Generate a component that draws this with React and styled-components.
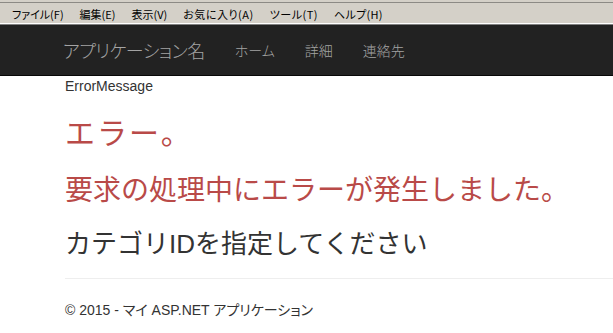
import React from "react";
import styled, { createGlobalStyle } from "styled-components";

const Global = createGlobalStyle`
  html, body { margin: 0; padding: 0; background: #fff; }
  body { font-family: "Liberation Sans", "Noto Sans CJK JP", sans-serif; color: #333; }
`;

const Page = styled.div`
  display: flex;
  flex-direction: column;
  width: 613px;
  overflow: hidden;
`;

const MenuBar = styled.div`
  height: 25px;
  box-sizing: border-box;
  display: flex;
  align-items: center;
  padding: 3px 0 0 4px;
  background: linear-gradient(
    to bottom,
    #d4d0c8 0 2px,
    #8c8a85 2px 3px,
    #d4d0c8 3px 23px,
    #ffffff 23px 24px,
    #808080 24px 25px
  );
  font-family: "Noto Sans CJK JP", sans-serif;
  font-feature-settings: "palt";
  font-size: 11px;
  color: #000;
`;

const MenuItem = styled.span`
  padding: 0 8px;
  white-space: nowrap;
  line-height: 16px;
  letter-spacing: ${(p) => p.$spacing || 0}px;
`;

const NavBar = styled.nav`
  height: 50px;
  background: #222;
  border-bottom: 1px solid #080808;
  display: flex;
  align-items: stretch;
  padding-left: 48px;
  font-family: "Noto Sans CJK JP", sans-serif;
  font-feature-settings: "palt";
  color: #9d9d9d;
`;

const Brand = styled.a`
  padding: 0 15px;
  line-height: 50px;
  font-size: 18px;
  letter-spacing: -0.5px;
  font-weight: 300;
  color: #a4a4a4;
  text-decoration: none;
  white-space: nowrap;
`;

const NavLink = styled.a`
  padding: 0 15px;
  line-height: 50px;
  font-size: 14px;
  font-weight: 300;
  color: #a4a4a4;
  text-decoration: none;
  white-space: nowrap;
`;

const Body = styled.main`
  display: flex;
  flex-direction: column;
  padding-left: 65px;
`;

const Message = styled.div`
  font-size: 14px;
  line-height: 20px;
  color: #333;
`;

const Heading = styled.div`
  font-size: ${(p) => p.$size}px;
  line-height: 1.1;
  letter-spacing: ${(p) => p.$spacing || 0}px;
  margin-top: ${(p) => p.$top}px;
  color: ${(p) => (p.$danger ? "#b94a48" : "#333")};
  white-space: nowrap;
`;

const Rule = styled.hr`
  margin: 20px 0 0;
  border: 0;
  border-top: 1px solid #eee;
  height: 0;
`;

const Footer = styled.footer`
  margin-top: 21px;
  font-size: 14px;
  line-height: 20px;
  color: #333;
  font-feature-settings: "palt";
  white-space: nowrap;
`;

export default function App() {
  const menus = [
    ["ファイル(F)", 0],
    ["編集(E)", 0],
    ["表示(V)", 0],
    ["お気に入り(A)", 0.5],
    ["ツール(T)", 0.5],
    ["ヘルプ(H)", 0.3],
  ];
  return (
    <Page>
      <Global />
      <MenuBar>
        {menus.map(([m, s]) => (
          <MenuItem key={m} $spacing={s}>{m}</MenuItem>
        ))}
      </MenuBar>
      <NavBar>
        <Brand>アプリケーション名</Brand>
        <NavLink>ホーム</NavLink>
        <NavLink>詳細</NavLink>
        <NavLink>連絡先</NavLink>
      </NavBar>
      <Body>
        <Message>ErrorMessage</Message>
        <Heading $size={30} $spacing={2} $top={21} $danger>エラー。</Heading>
        <Heading $size={28} $top={26} $danger>要求の処理中にエラーが発生しました。</Heading>
        <Heading $size={26} $top={23}>カテゴリIDを指定してください</Heading>
        <Rule />
        <Footer>© 2015 - マイ ASP.NET アプリケーション</Footer>
      </Body>
    </Page>
  );
}
